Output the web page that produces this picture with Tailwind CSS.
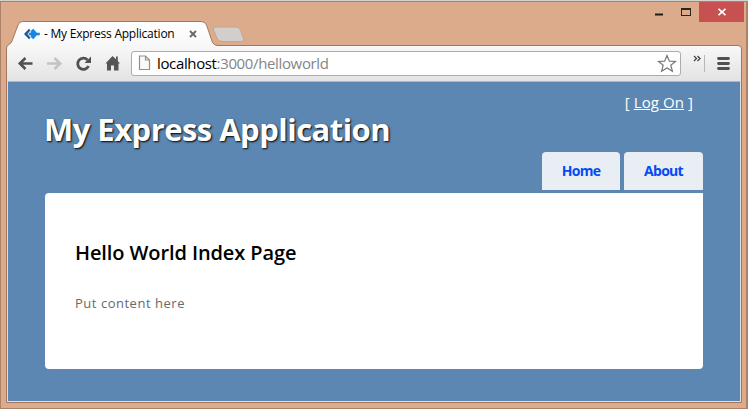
<!DOCTYPE html>
<html lang="en">
<head>
<meta charset="utf-8">
<title>My Express Application</title>
<script src="https://cdn.jsdelivr.net/npm/@tailwindcss/browser@4"></script>
</head>
<body class="w-[748px] h-[409px] overflow-hidden">
<div class="relative isolate flex flex-col w-[748px] h-[409px] bg-[#dbab8b] border-l border-r-2 border-b border-[#ab8268] font-['Open_Sans',sans-serif]">
  <!-- window and tab outline -->
  <svg class="absolute -left-px top-0 -z-10" width="748" height="409" viewBox="0 0 748 409" fill="none">
    <defs>
      <linearGradient id="bar" x1="0" y1="22" x2="0" y2="81" gradientUnits="userSpaceOnUse"><stop stop-color="#fff"/><stop offset=".4" stop-color="#f8f8f8"/><stop offset="1" stop-color="#e3e3e3"/></linearGradient>
    </defs>
    <path d="M0 .5H748" stroke="#d0d3d0"/><path d="M0 1.5H748" stroke="#ab8268"/>
    <path d="M6.5 402.5V48Q6.500 45.500 9 44.500Q11 43.500 12 41L18 25Q19.200 21.500 22.500 21.500H201Q205 21.500 206.500 25L212 41Q213.500 45.500 218 45.500H738Q741.500 45.500 741.500 49V402.500Z" fill="url(#bar)" stroke="#a2775e"/>
    <path d="M215.500 27H236.500Q239.500 27 240.500 30L243.500 38.500Q244.500 41.500 241.500 41.500H222Q218.500 41.500 217 38L213.500 30Q212.500 27 215.500 27Z" fill="#d2cecb" stroke="#c9a48c"/>
  </svg>

  <header class="h-[45px] flex justify-between">
    <div class="flex items-center h-[24px] mt-[22px] pl-[22px]">
      <svg width="17" height="12" viewBox="0 0 17 12"><path d="M6 .8L1 6L6 11.200L7.500 9.800L4.500 6L7.500 2.200Z" fill="#1b5da0"/><path d="M10.200 .8L13.800 4.800H16.800V7.200H13.800L10.200 11.200L7.800 9V7.300H5.800V4.700H7.800V3Z" fill="#1686e2"/></svg>
      <span class="ml-[4px] w-[131px] text-[12px] leading-4 whitespace-nowrap text-black tracking-[-0.23px]">- My Express Application</span>
      <svg class="ml-[14px]" width="8" height="8" viewBox="0 0 8 8"><path d="M1 1L7 7M7 1L1 7" stroke="#666" stroke-width="1.800"/></svg>
    </div>
    <div class="flex h-[20px] mt-[2px] mr-[2px]">
      <svg width="52" height="20" viewBox="0 0 52 20"><path d="M8 12.500H16" stroke="#1c1c1c" stroke-width="2"/><path d="M34 6.500H44M34.500 6V14M43.500 6V14M34 13.500H44" stroke="#2b241f"/><path d="M34 7H44" stroke="#2b241f" stroke-width="2"/></svg>
      <div class="w-[45px] bg-[#c75050] flex items-center justify-center"><svg width="8" height="8" viewBox="0 0 8 8"><path d="M.5 .8L7.500 7.200M7.500 .8L.5 7.200" stroke="#fff" stroke-width="1.700"/></svg></div>
    </div>
  </header>

  <nav class="mx-[7px] h-[37px] flex items-center border-b border-[#b5b5b5] w-[732px]">
    <svg width="120" height="36" viewBox="8 45 120 36" fill="none">
      <path d="M32.500 63.500H20M25.500 58L19.800 63.500L25.500 69" stroke="#505050" stroke-width="2.600"/>
      <path d="M47 63.500H60M54.500 58L60.200 63.500L54.500 69" stroke="#c3c3c3" stroke-width="2.600"/>
      <path d="M87.500 60A5.600 5.600 0 1 0 88.500 66" stroke="#505050" stroke-width="2.800"/><path d="M91 56.500V63H84.500Z" fill="#505050"/>
      <path d="M112.500 56L105.500 63.500H107V70.500H111V65.500H114V70.500H118.500V63.500H120L117.800 61V56.500H116V59.200Z" fill="#555"/>
    </svg>
    <div class="ml-[3px] w-[550px] h-[25px] rounded-[3px] border border-[#acacac] bg-white flex items-center">
      <svg class="ml-[6px]" width="13" height="16" viewBox="0 0 13 16" fill="none"><path d="M1.500 1H7.500L11.500 5V14.500H1.500ZM7.500 1V5H11.500" fill="#fafafa" stroke="#909090" stroke-width="1.200"/></svg>
      <span class="ml-[6px] flex-1 text-[15px] leading-5 whitespace-nowrap text-black tracking-[-0.36px]">localhost<span class="text-[#858585]">:3000/helloworld</span></span>
      <svg class="mr-[3px]" width="20" height="19" viewBox="0 0 20 19"><path d="M10 1.500L12.400 7.200L18.500 7.500L13.800 11.200L15.400 17.200L10 13.900L4.600 17.200L6.200 11.200L1.500 7.500L7.600 7.200Z" fill="#fff" stroke="#777" stroke-width="1.200"/></svg>
    </div>
    <svg width="58" height="36" viewBox="681 45 58 36" fill="none">
      <path d="M694 56L696.500 58.500L694 61M697.500 56L700 58.500L697.500 61" stroke="#444" stroke-width="1.300"/>
      <path d="M704.500 55V72" stroke="#b8b8b8"/>
      <path d="M718.500 58.500H728.500M718.500 63.500H728.500M718.500 68.500H728.500" stroke="#505050" stroke-width="2.800" stroke-linecap="round"/>
    </svg>
  </nav>

  <main class="ml-[6px] w-[734px] h-[320px] bg-[#5c87b2] border-x border-b border-[#dce0e0] px-[37px] flex flex-col">
    <div class="h-[111px] flex justify-between">
      <h1 class="-ml-px pt-[25px] text-[31px] leading-[44px] font-bold text-white whitespace-nowrap tracking-[-0.53px] [text-shadow:1px_1px_2px_#000]">My Express Application</h1>
      <div class="flex flex-col items-end">
        <div class="h-[70px] pt-[9px] pr-[10px] text-[15px] leading-[22px] text-white whitespace-nowrap tracking-[0.08px]">[ <a class="underline" href="#">Log On</a> ]</div>
        <div class="flex gap-1 text-[14px] leading-[38px] text-[#034af3] font-bold text-center tracking-[-0.7px]">
          <a href="#" class="block w-[78px] h-[38px] rounded-t-[4px] bg-[#e8eef4]">Home</a>
          <a href="#" class="block w-[79px] h-[38px] rounded-t-[4px] bg-[#e8eef4]">About</a>
        </div>
      </div>
    </div>
    <section class="w-[658px] h-[176px] bg-white rounded-l-[4px] rounded-br-[4px] pl-[30px] pt-[46px]">
      <h2 class="text-[20px] leading-[28px] font-semibold text-black whitespace-nowrap tracking-[-0.1px]">Hello World Index Page</h2>
      <p class="mt-[26px] text-[13px] leading-[20px] text-[#696969] whitespace-nowrap tracking-[0.52px]">Put content here</p>
    </section>
  </main>
</div>
</body>
</html>
